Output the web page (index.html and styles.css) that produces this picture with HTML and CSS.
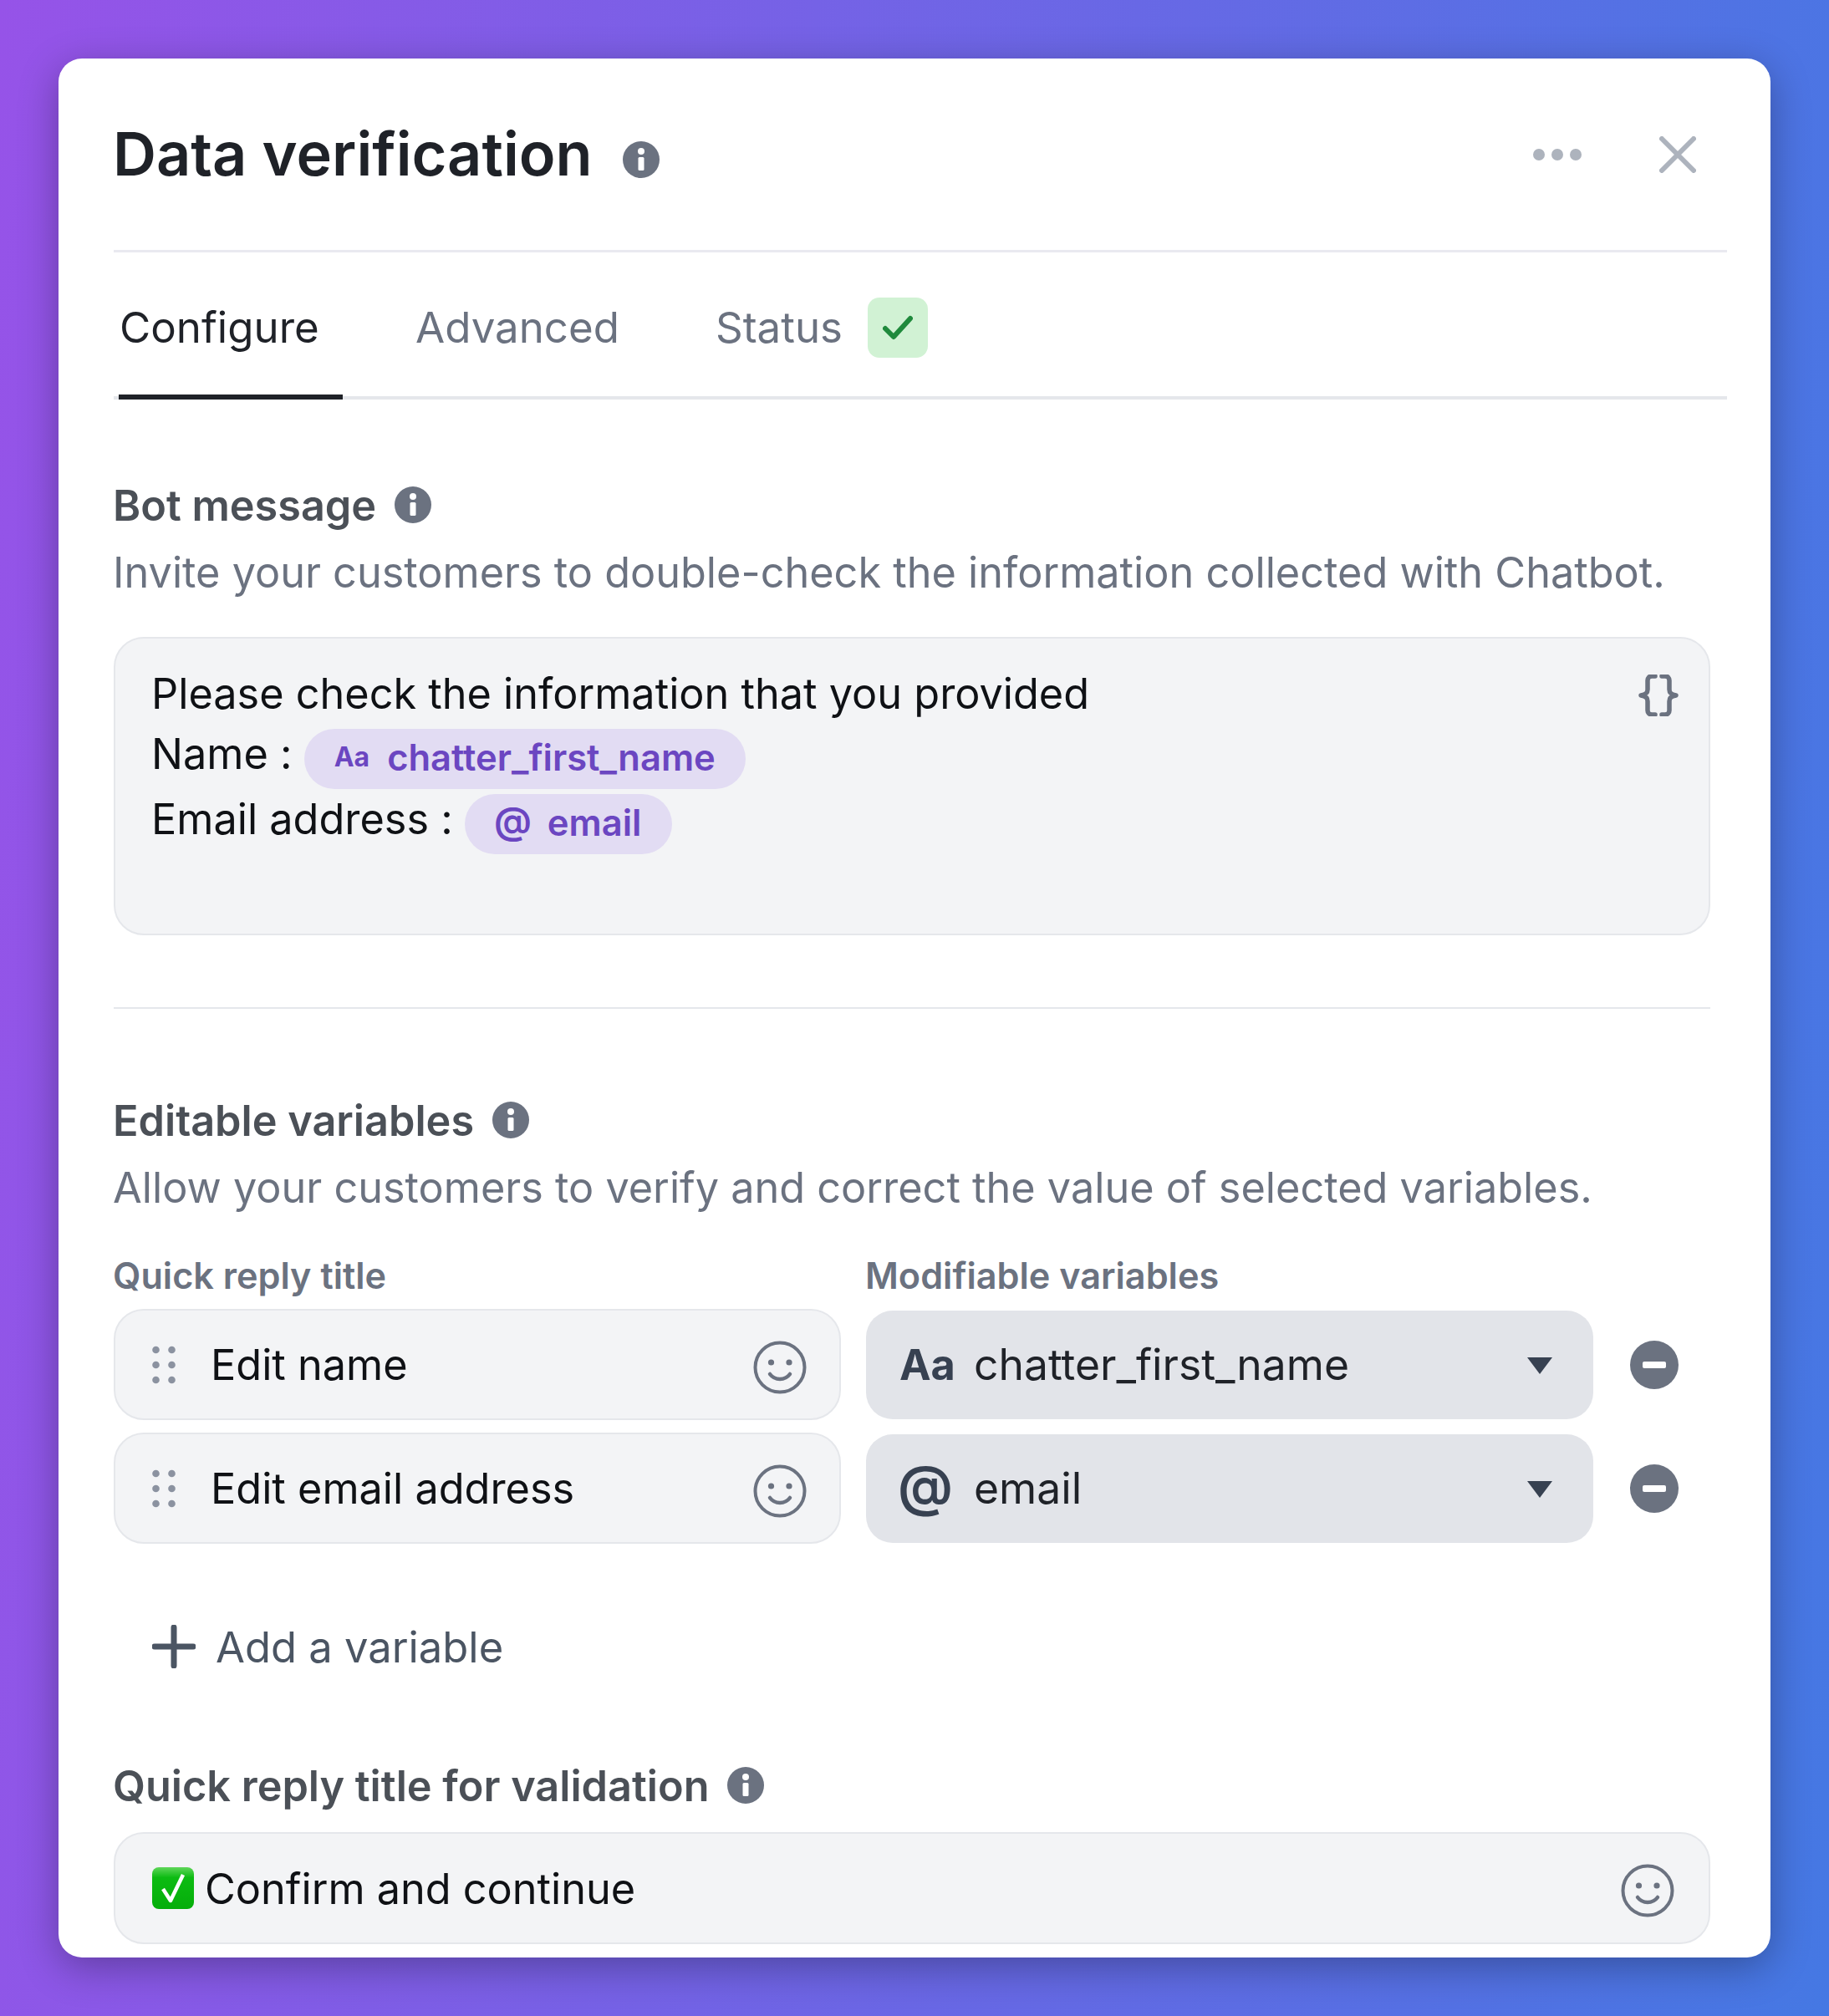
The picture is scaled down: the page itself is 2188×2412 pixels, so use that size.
FILE: index.html
```html
<!DOCTYPE html>
<html lang="en">
<head>
    <meta charset="UTF-8">
    <title>Data verification</title>
    <link rel="stylesheet" href="styles.css">
</head>
<body>
    <svg class="sprite" xmlns="http://www.w3.org/2000/svg">
        <symbol id="info" viewBox="0 0 44 44">
            <circle cx="22" cy="22" r="22" fill="#6b7280"/>
            <circle cx="22" cy="12" r="4" fill="#fff"/>
            <rect x="18.5" y="19" width="7" height="16" rx="1.5" fill="#fff"/>
        </symbol>
        <symbol id="smile" viewBox="0 0 64 64">
            <circle cx="32" cy="32" r="29.5" fill="none" stroke="#6b7280" stroke-width="4"/>
            <circle cx="21.5" cy="26" r="3.6" fill="#6b7280"/>
            <circle cx="43" cy="26" r="3.6" fill="#6b7280"/>
            <path d="M20 40c6 8 18 8 24 0" fill="none" stroke="#6b7280" stroke-width="4.5" stroke-linecap="round"/>
        </symbol>
        <symbol id="drag" viewBox="0 0 28 46">
            <circle cx="4.5" cy="5" r="4.3"/><circle cx="23.5" cy="5" r="4.3"/>
            <circle cx="4.5" cy="23" r="4.3"/><circle cx="23.5" cy="23" r="4.3"/>
            <circle cx="4.5" cy="41" r="4.3"/><circle cx="23.5" cy="41" r="4.3"/>
        </symbol>
        <symbol id="minus" viewBox="0 0 58 58">
            <circle cx="29" cy="29" r="29" fill="#6b7280"/>
            <rect x="15" y="25" width="28" height="8" rx="2" fill="#fff"/>
        </symbol>
    </svg>

    <div class="card">
        <div class="header">
            <h1 class="title">Data verification</h1>
            <svg class="icon-info title-info"><use href="#info"/></svg>
            <svg class="icon-more" viewBox="0 0 58 14"><circle cx="7" cy="7" r="7"/><circle cx="29" cy="7" r="7"/><circle cx="51" cy="7" r="7"/></svg>
            <svg class="icon-close" viewBox="0 0 44 44"><path d="M3 3l38 38M41 3L3 41"/></svg>
        </div>

        <div class="tabs">
            <div class="tab active">Configure</div>
            <div class="tab">Advanced</div>
            <div class="tab">Status</div>
            <div class="status-check">
                <svg viewBox="0 0 36 30"><path d="M3 16l10 10L33 4"/></svg>
            </div>
        </div>

        <div class="label label-first">Bot message <svg class="icon-info"><use href="#info"/></svg></div>
        <p class="desc">Invite your customers to double-check the information collected with Chatbot.</p>

        <div class="message-box">
            <div class="message-lines">
                <div class="line-plain">Please check the information that you provided</div>
                <div class="line">Name : <span class="pill"><span class="pill-aa">Aa</span>chatter_first_name</span></div>
                <div class="line">Email address : <span class="pill"><span class="pill-at">@</span>email</span></div>
            </div>
            <svg class="icon-braces" viewBox="0 0 52 50"><path d="M22 2h-4c-3 0-5 2-5 5v11c0 4-2 6-8 7 6 1 8 3 8 7v11c0 3 2 5 5 5h4M30 2h4c3 0 5 2 5 5v11c0 4 2 6 8 7-6 1-8 3-8 7v11c0 3-2 5-5 5h-4"/></svg>
        </div>

        <hr class="divider">

        <div class="label label-second">Editable variables <svg class="icon-info"><use href="#info"/></svg></div>
        <p class="desc">Allow your customers to verify and correct the value of selected variables.</p>

        <div class="variables">
            <div class="col-title">Quick reply title</div>
            <div class="col-title">Modifiable variables</div>
            <div></div>

            <div class="field">
                <svg class="icon-drag"><use href="#drag"/></svg>
                <span class="field-text">Edit name</span>
                <svg class="icon-smile"><use href="#smile"/></svg>
            </div>
            <div class="select">
                <span class="select-aa">Aa</span>
                <span class="select-text">chatter_first_name</span>
                <span class="caret"></span>
            </div>
            <svg class="icon-minus"><use href="#minus"/></svg>

            <div class="field">
                <svg class="icon-drag"><use href="#drag"/></svg>
                <span class="field-text">Edit email address</span>
                <svg class="icon-smile"><use href="#smile"/></svg>
            </div>
            <div class="select">
                <span class="select-at">@</span>
                <span class="select-text">email</span>
                <span class="caret"></span>
            </div>
            <svg class="icon-minus"><use href="#minus"/></svg>
        </div>

        <div class="add-row">
            <svg class="icon-plus" viewBox="0 0 52 52"><path d="M26 3v46M3 26h46"/></svg>
            Add a variable
        </div>

        <div class="label label-third">Quick reply title for validation <svg class="icon-info"><use href="#info"/></svg></div>

        <div class="field field-wide">
            <svg class="icon-emoji" viewBox="0 0 50 50">
                <defs>
                    <linearGradient id="emojiGreen" x1="0" y1="0" x2="0" y2="1">
                        <stop offset="0" stop-color="#5fd65a"/>
                        <stop offset="0.25" stop-color="#0cbb12"/>
                        <stop offset="1" stop-color="#05ae0a"/>
                    </linearGradient>
                </defs>
                <rect width="50" height="50" rx="8" fill="url(#emojiGreen)"/>
                <path d="M13 26l9 14L37 9" fill="none" stroke="#fff" stroke-width="4.5" stroke-linejoin="round"/>
            </svg>
            <span class="field-text">Confirm and continue</span>
            <svg class="icon-smile"><use href="#smile"/></svg>
        </div>
    </div>
</body>
</html>
```

FILE: styles.css
```css
* {
    box-sizing: border-box;
}
html, body {
    margin: 0;
    padding: 0;
}
body {
    width: 2188px;
    height: 2412px;
    padding: 70px;
    overflow: hidden;
    font-family: Inter, "Liberation Sans", sans-serif;
    color: #0f1115;
    background: linear-gradient(95deg, #9653e8, #4578e3);
}
.sprite {
    display: none;
}
.card {
    width: 2048px;
    height: 2272px;
    padding: 0 52px 0 66px;
    overflow: hidden;
    background: #fff;
    border-radius: 28px;
    box-shadow: 0 12px 48px rgba(0, 0, 0, 0.3);
}

/* header */
.header {
    display: flex;
    align-items: center;
    height: 232px;
    border-bottom: 3px solid #e9e9f0;
}
.title {
    margin: -2px 0 0 -1px;
    font-size: 72px;
    font-weight: 600;
    color: #1f2228;
}
.icon-info {
    width: 44px;
    height: 44px;
    flex: none;
}
.title-info {
    margin: 12px 0 0 36px;
}
.icon-more {
    width: 58px;
    height: 14px;
    margin-left: auto;
    fill: #adb3bd;
}
.icon-close {
    width: 44px;
    height: 44px;
    margin: 0 37px 0 93px;
    fill: none;
    stroke: #adb3bd;
    stroke-width: 6;
    stroke-linecap: round;
}

/* tabs */
.tabs {
    display: flex;
    align-items: flex-start;
    height: 176px;
    border-bottom: 4px solid #e5e7eb;
    font-size: 51px;
    color: #6b7280;
}
.tab {
    display: flex;
    align-items: center;
    height: 176px;
    padding-top: 8px;
    border-bottom: 6px solid transparent;
}
.tab.active {
    width: 268px;
    margin: 0 87px 0 6px;
    padding-left: 1px;
    color: #1f2228;
    border-bottom-color: #1f2228;
}
.tab:nth-child(2) {
    margin-right: 115px;
}
.status-check {
    display: flex;
    align-items: center;
    justify-content: center;
    width: 72px;
    height: 72px;
    margin: 54px 0 0 30px;
    background: #d1f2d4;
    border-radius: 14px;
}
.status-check svg {
    width: 36px;
    height: 30px;
    fill: none;
    stroke: #1f8a3c;
    stroke-width: 6;
    stroke-linecap: round;
    stroke-linejoin: round;
}

/* section titles */
.label {
    display: flex;
    align-items: center;
    gap: 22px;
    height: 60px;
    margin-left: -1px;
    font-size: 50.4px;
    font-weight: 600;
    color: #4b5057;
}
.label-first {
    margin-top: 96px;
}
.label-second {
    margin-top: 103px;
}
.label-third {
    margin-top: 106px;
}
.desc {
    margin: 21px 0 0 -1px;
    font-size: 50.4px;
    line-height: 60px;
    color: #6b7280;
}

/* message box */
.message-box {
    display: flex;
    justify-content: space-between;
    width: 1910px;
    height: 357px;
    margin-top: 47px;
    padding: 36px 34px 0 43px;
    font-size: 50.4px;
    line-height: 60px;
    background: #f3f4f6;
    border: 2px solid #e5e7eb;
    border-radius: 36px;
}
.line-plain {
    margin-bottom: 12px;
}
.line {
    display: flex;
    height: 72px;
    margin-bottom: 6px;
    white-space: pre;
}
.pill {
    display: flex;
    align-items: center;
    height: 72px;
    padding: 0 36px 4px;
    font-size: 43.5px;
    font-weight: 600;
    color: #6b46c1;
    background: #e2dcf3;
    border-radius: 36px;
}
.pill-aa {
    margin-right: 21px;
    font-size: 32px;
    font-weight: 700;
}
.pill-at {
    margin: 0 19px 4px -1px;
    font-size: 45px;
    font-weight: 600;
}
.icon-braces {
    width: 52px;
    height: 50px;
    margin-top: 7px;
    fill: none;
    stroke: #6b7280;
    stroke-width: 5.5;
    stroke-linecap: round;
    stroke-linejoin: round;
}
.divider {
    width: 1910px;
    height: 2px;
    margin: 86px 0 0;
    background: #e5e7eb;
    border: none;
}

/* editable variables */
.variables {
    display: grid;
    grid-template-columns: 870px 870px 58px;
    grid-template-rows: 50px 133px 133px;
    column-gap: 30px;
    row-gap: 15px;
    align-items: center;
    margin-top: 50px;
}
.col-title {
    margin-left: -1px;
    font-size: 43.2px;
    font-weight: 600;
    color: #6b7280;
}
.field {
    display: flex;
    align-items: center;
    height: 133px;
    padding: 0 39px 0 44px;
    font-size: 50.4px;
    background: #f3f4f6;
    border: 2px solid #e5e7eb;
    border-radius: 36px;
}
.field-wide {
    width: 1910px;
    height: 134px;
    margin-top: 26px;
    padding-right: 41px;
}
.icon-drag {
    width: 28px;
    height: 46px;
    margin-right: 42px;
    fill: #8b92a0;
}
.field-text {
    flex: 1;
}
.icon-smile {
    width: 64px;
    height: 64px;
    margin-top: 6px;
    flex: none;
}
.select {
    display: flex;
    align-items: center;
    height: 130px;
    padding: 0 49px 0 40px;
    font-size: 51.6px;
    color: #1f2228;
    background: #e2e4e9;
    border-radius: 32px;
}
.select-aa,
.select-at {
    width: 89px;
    flex: none;
    font-size: 50.4px;
    font-weight: 700;
    color: #374151;
}
.select-at {
    margin: 0 0 8px -2px;
    width: 91px;
    font-size: 66px;
    font-weight: 600;
}
.select-text {
    flex: 1;
    margin-bottom: 2px;
}
.caret {
    width: 0;
    height: 0;
    margin-top: 3px;
    border-top: 20px solid #374151;
    border-left: 15px solid transparent;
    border-right: 15px solid transparent;
}
.icon-minus {
    width: 58px;
    height: 58px;
    margin-left: 14px;
}

/* add a variable */
.add-row {
    display: flex;
    align-items: center;
    gap: 24px;
    height: 60px;
    margin-top: 93px;
    padding-left: 46px;
    font-size: 50.7px;
    color: #4b5563;
}
.icon-plus {
    width: 52px;
    height: 52px;
    fill: none;
    stroke: #4b5563;
    stroke-width: 7;
    stroke-linecap: round;
}
.icon-emoji {
    width: 50px;
    height: 50px;
    margin-right: 13px;
    flex: none;
}
```
